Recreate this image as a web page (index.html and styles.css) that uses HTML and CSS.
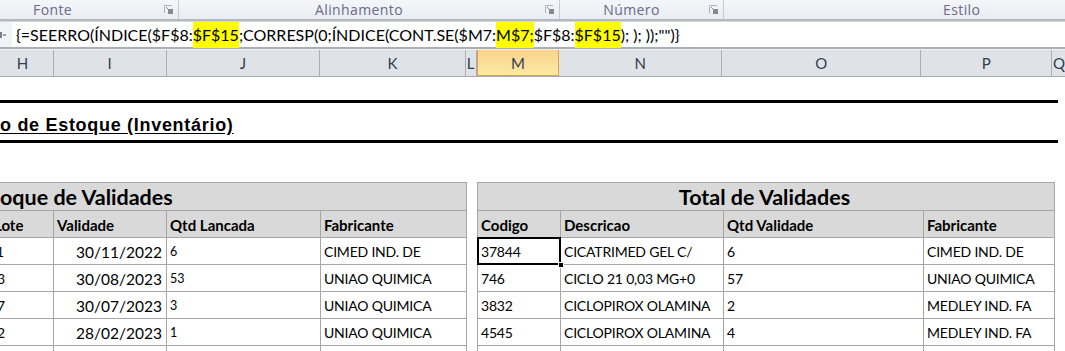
FILE: index.html
```html
<!DOCTYPE html>
<html lang="pt-BR">
<head>
    <meta charset="UTF-8">
    <title>Estoque de Validades</title>
    <link rel="stylesheet" href="styles.css">
</head>
<body>
    <!-- faixa dos grupos da faixa de opções -->
    <div class="ribbon">
        <div class="group g-fonte">
            <span class="group-label">Fonte</span>
            <span class="launcher"><svg width="9" height="9" viewBox="0 0 9 9"><path d="M0.5 8V0.5H8" fill="none" stroke="#aeb2b9"/><rect x="4" y="4" width="5" height="5" fill="#868a92"/><path d="M2 2L5.5 5.5" stroke="#868a92"/></svg></span>
        </div>
        <div class="group g-alinh">
            <span class="group-label">Alinhamento</span>
            <span class="launcher"><svg width="9" height="9" viewBox="0 0 9 9"><path d="M0.5 8V0.5H8" fill="none" stroke="#aeb2b9"/><rect x="4" y="4" width="5" height="5" fill="#868a92"/><path d="M2 2L5.5 5.5" stroke="#868a92"/></svg></span>
        </div>
        <div class="group g-num">
            <span class="group-label">Número</span>
            <span class="launcher"><svg width="9" height="9" viewBox="0 0 9 9"><path d="M0.5 8V0.5H8" fill="none" stroke="#aeb2b9"/><rect x="4" y="4" width="5" height="5" fill="#868a92"/><path d="M2 2L5.5 5.5" stroke="#868a92"/></svg></span>
        </div>
        <div class="group g-estilo">
            <span class="group-label">Estilo</span>
        </div>
    </div>

    <!-- barra de fórmulas -->
    <div class="formula-row">
        <div class="fx-stub"><svg width="6" height="8" viewBox="0 0 6 8"><rect x="0" y="1" width="2" height="6" fill="#7a7f87"/><rect x="3" y="3" width="3" height="2" fill="#9a9fa6"/></svg></div>
        <div class="formula">{=SEERRO(ÍNDICE($F$8:<span class="hl">$F$15</span>;CORRESP(0;ÍNDICE(CONT.SE($M7:<span class="hl">M$7;</span>$F$8:<span class="hl">$F$15</span>); ); ));"")}</div>
    </div>

    <!-- cabeçalho das colunas -->
    <div class="col-heads">
        <div class="col-h c-h">H</div>
        <div class="col-h c-i">I</div>
        <div class="col-h c-j">J</div>
        <div class="col-h c-k">K</div>
        <div class="col-h c-l">L</div>
        <div class="col-h c-m active">M</div>
        <div class="col-h c-n">N</div>
        <div class="col-h c-o">O</div>
        <div class="col-h c-p">P</div>
        <div class="col-h c-q">Q</div>
    </div>

    <div class="sheet">
        <div class="rule rule-top"></div>
        <div class="doc-title"><span>o de Estoque (Inventário)</span></div>
        <div class="rule"></div>

        <div class="tables">
            <div class="tbl tbl-left">
                <div class="cell tcap">oque de Validades</div>
                <div class="cell head lote">Lote</div>
                <div class="cell head">Validade</div>
                <div class="cell head">Qtd Lancada</div>
                <div class="cell head">Fabricante</div>

                <div class="cell lote"><span class="cy">1</span>1</div>
                <div class="cell date">30/11/2022</div>
                <div class="cell small">6</div>
                <div class="cell">CIMED IND. DE</div>

                <div class="cell lote cut">3</div>
                <div class="cell date">30/08/2023</div>
                <div class="cell small">53</div>
                <div class="cell">UNIAO QUIMICA</div>

                <div class="cell lote cut">7</div>
                <div class="cell date">30/07/2023</div>
                <div class="cell small">3</div>
                <div class="cell">UNIAO QUIMICA</div>

                <div class="cell lote cut">2</div>
                <div class="cell date">28/02/2023</div>
                <div class="cell small">1</div>
                <div class="cell">UNIAO QUIMICA</div>

                <div class="cell"></div>
                <div class="cell"></div>
                <div class="cell"></div>
                <div class="cell"></div>
            </div>

            <div class="tbl tbl-right">
                <div class="cell tcap center">Total de Validades</div>
                <div class="cell head">Codigo</div>
                <div class="cell head">Descricao</div>
                <div class="cell head">Qtd Validade</div>
                <div class="cell head">Fabricante</div>

                <div class="cell sel">37844</div>
                <div class="cell">CICATRIMED GEL C/</div>
                <div class="cell">6</div>
                <div class="cell">CIMED IND. DE</div>

                <div class="cell">746</div>
                <div class="cell">CICLO 21 0,03 MG+0</div>
                <div class="cell">57</div>
                <div class="cell">UNIAO QUIMICA</div>

                <div class="cell">3832</div>
                <div class="cell">CICLOPIROX OLAMINA</div>
                <div class="cell">2</div>
                <div class="cell">MEDLEY IND. FA</div>

                <div class="cell">4545</div>
                <div class="cell">CICLOPIROX OLAMINA</div>
                <div class="cell">4</div>
                <div class="cell">MEDLEY IND. FA</div>

                <div class="cell"></div>
                <div class="cell"></div>
                <div class="cell"></div>
                <div class="cell"></div>
            </div>
        </div>
    </div>
</body>
</html>
```

FILE: styles.css
```css
html,body{
    margin: 0;
    padding: 0;
}
body{
    width: 1065px;
    height: 351px;
    overflow: hidden;
    background: #ffffff;
    font-family: Lato, "Liberation Sans", sans-serif;
    color: #000000;
}

/* faixa de opções */
.ribbon{
    display: flex;
    height: 21px;
    box-sizing: border-box;
    background: linear-gradient(#f4f6f9, #e9edf2);
    border-bottom: 2px solid #b4b9c0;
    font: 14px/19px "Open Sans", "Noto Sans", sans-serif;
    letter-spacing: 0.4px;
    color: #6c6a88;
}
.group{
    display: flex;
    box-sizing: border-box;
    border-right: 1px solid #c6cbd2;
}
.group-label{
    flex: 1;
    text-align: center;
}
.launcher{
    width: 20px;
    display: flex;
    align-items: center;
    justify-content: center;
}
.g-fonte{ width: 179px; }
.g-fonte .group-label{
    text-align: left;
    padding-left: 33px;
}
.g-alinh{ width: 381px; }
.g-num{ width: 164px; }
.g-estilo{
    flex: 1;
    border-right: 0;
}
.g-estilo .group-label{
    text-align: left;
    padding-left: 219px;
}

/* barra de fórmulas */
.formula-row{
    display: flex;
    height: 28px;
    box-sizing: border-box;
    background: #ffffff;
    border-top: 1px solid #d3d7dc;
    border-bottom: 2px solid #a9aeb5;
}
.fx-stub{
    width: 12px;
    display: flex;
    align-items: center;
    background: #f1f3f6;
}
.formula{
    padding-left: 4px;
    font-size: 16px;
    line-height: 25px;
    white-space: nowrap;
    color: #000000;
}
.hl{
    background: #ffff00;
    padding: 3px 0 4px;
}

/* letras das colunas */
.col-heads{
    display: flex;
    height: 28px;
    box-sizing: border-box;
    background: #dfe3e8;
    border-top: 1px solid #eef0f3;
    border-bottom: 1px solid #a3a9b1;
}
.col-h{
    box-sizing: border-box;
    border-right: 1px solid #a9afb6;
    display: flex;
    align-items: center;
    justify-content: center;
    font-size: 15px;
    color: #2f3d50;
}
.c-h{ width: 54px; padding-right: 8px; }
.c-i{ width: 113px; }
.c-j{ width: 154px; }
.c-k{ width: 146px; }
.c-l{ width: 11px; justify-content: flex-start; padding-left: 1px; }
.c-m{ width: 83px; }
.c-n{ width: 163px; }
.c-o{ width: 200px; }
.c-p{ width: 131px; }
.c-q{ flex: 1; border-right: 0; justify-content: flex-start; padding-left: 1px; }
.col-h.active{
    background: linear-gradient(#f9d38a, #fde9a6);
    border: 1px solid #dda448;
    border-top: 0;
}

/* planilha */
.rule{
    width: 1058px;
    height: 3px;
    background: #000000;
}
.rule-top{
    margin-top: 23px;
}
.doc-title{
    height: 37px;
    box-sizing: border-box;
    padding-top: 12px;
    font: bold 18px "Liberation Sans", Arial, sans-serif;
    letter-spacing: 0.7px;
    white-space: nowrap;
}
.doc-title span{
    text-decoration: underline;
    text-underline-offset: 2px;
}

.tables{
    display: flex;
    align-items: flex-start;
    margin-top: 39px;
}
.tbl{
    display: grid;
    gap: 1px;
    grid-template-rows: 27px repeat(6, 26px);
    background: #a6a6a6;
}
.tbl-left{
    grid-template-columns: 53px 112px 153px 145px;
    padding: 1px 1px 0 0;
}
.tbl-right{
    grid-template-columns: 82px 162px 199px 130px;
    padding: 1px 1px 0 1px;
    margin-left: 10px;
}
.cell{
    display: flex;
    align-items: center;
    padding: 1px 3px 0;
    background: #ffffff;
    overflow: hidden;
    white-space: nowrap;
    font-size: 14px;
    letter-spacing: -0.2px;
}
.head{
    background: #d9d9d9;
    font-weight: bold;
    font-size: 15px;
    letter-spacing: 0;
}
.tcap{
    grid-column: 1 / -1;
    background: #d9d9d9;
    font-weight: bold;
    font-size: 21.5px;
    letter-spacing: 0;
    padding-left: 0;
}
.tcap.center{
    justify-content: center;
}
.lote{
    padding-left: 0;
    text-indent: -6px;
}
.lote.cut{
    text-indent: -3px;
}
.cy{
    color: #2fd6f0;
}
.date{
    justify-content: flex-end;
    align-items: flex-end;
    font-size: 15.5px;
    letter-spacing: 0;
    padding-right: 4px;
    padding-bottom: 3px;
}
.small{
    align-items: flex-start;
    font-size: 12.5px;
    letter-spacing: 0;
    padding-top: 6px;
}
.sel{
    position: relative;
    z-index: 1;
    overflow: visible;
    box-shadow: 0 0 0 1px #000000, inset 0 0 0 1px #000000;
}
.sel::after{
    content: "";
    position: absolute;
    right: -4px;
    bottom: -4px;
    width: 4px;
    height: 4px;
    background: #000000;
    border: 1px solid #ffffff;
}
```
